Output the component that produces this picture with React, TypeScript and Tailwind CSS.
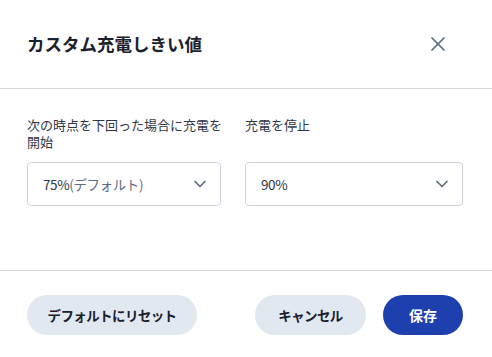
import { ChevronDown } from 'lucide-react'

const font = { fontFamily: '"Noto Sans CJK JP", "Noto Sans", sans-serif' }

function Select({ children, width }: { children: React.ReactNode; width: string }) {
  return (
    <div
      className={`${width} flex h-[44px] items-center justify-between rounded-[4px] border border-[#cbd2d9] bg-white pl-[15px] pr-[10px] text-[13.5px] tracking-[-0.4px]`}
    >
      <span>{children}</span>
      <ChevronDown size={20} strokeWidth={2} className="text-[#5f6b7a]" />
    </div>
  )
}

export default function App() {
  return (
    <div className="h-[357px] w-[492px] bg-white text-[#1a202c]" style={font}>
      {/* Header */}
      <div className="flex h-[89px] items-center justify-between border-b border-[#d3d9e0] pl-[27px] pr-[47px]">
        <h1 className="text-[17.5px] font-bold">カスタム充電しきい値</h1>
        <svg width="14" height="14" viewBox="0 0 14 14" className="text-[#5a6b82]">
          <path d="M1 1L13 13M13 1L1 13" stroke="currentColor" strokeWidth="1.75" strokeLinecap="round" />
        </svg>
      </div>

      {/* Body */}
      <div className="flex h-[182px] gap-[24px] border-b border-[#d3d9e0] px-[27px] pt-[27px]">
        <div className="flex w-[194px] flex-col">
          <div className="h-[46px] w-[200px] text-[13px] leading-[17px] text-[#2d3748]">
            次の時点を下回った場合に充電を開始
          </div>
          <Select width="w-[194px]">
            <span className="text-[#2d3748]">75%</span>
            <span className="text-[#5f6b7f]">(デフォルト)</span>
          </Select>
        </div>
        <div className="flex w-[218px] flex-col">
          <div className="h-[46px] text-[13px] leading-[17px] text-[#2d3748]">充電を停止</div>
          <Select width="w-[218px]">
            <span className="text-[#2d3748]">90%</span>
          </Select>
        </div>
      </div>

      {/* Footer */}
      <div className="flex items-center justify-between pl-[27px] pr-[29px] pt-[24px]">
        <button className="h-[40px] w-[170px] rounded-full bg-[#e2e8f0] text-[13.5px] font-semibold tracking-[-0.6px] text-[#1a202c]">
          デフォルトにリセット
        </button>
        <div className="flex gap-[17px]">
          <button className="h-[40px] w-[111px] rounded-full bg-[#e2e8f0] text-[13.5px] font-semibold tracking-[-0.6px] text-[#1a202c]">
            キャンセル
          </button>
          <button className="h-[40px] w-[80px] rounded-full bg-[#1e40af] text-[14px] font-semibold text-white">
            保存
          </button>
        </div>
      </div>
    </div>
  )
}
